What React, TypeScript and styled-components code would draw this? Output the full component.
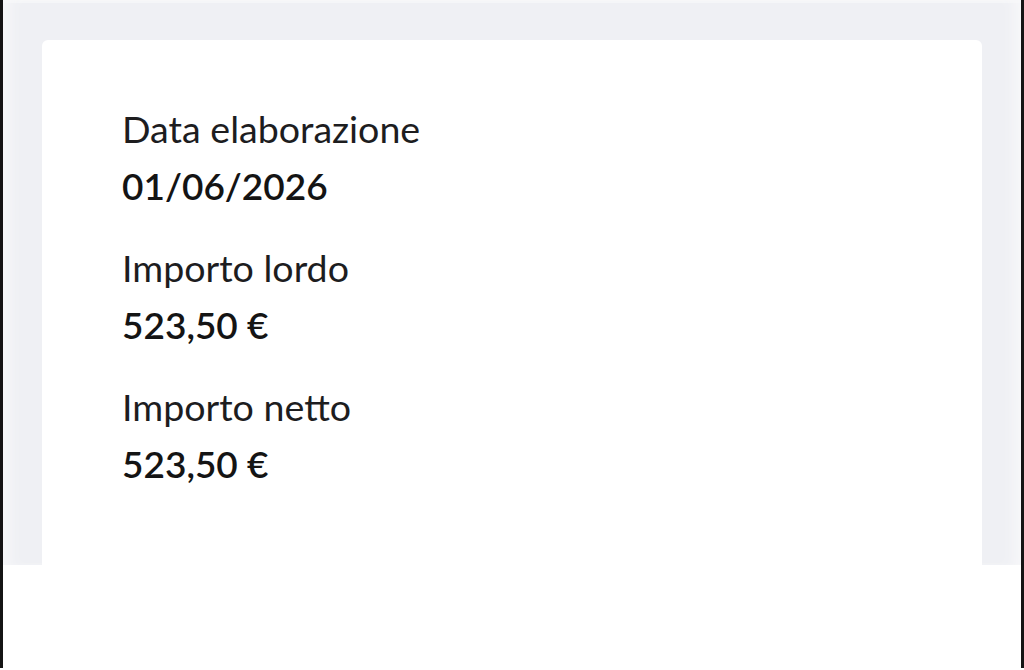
import React from "react";
import styled, { createGlobalStyle } from "styled-components";

const GlobalStyle = createGlobalStyle`
  html, body {
    margin: 0;
    padding: 0;
    background: #ffffff;
  }
  * { box-sizing: border-box; }
`;

const Frame = styled.div`
  width: 1024px;
  height: 668px;
  border-left: 3px solid #141414;
  border-right: 3px solid #141414;
  background: #ffffff;
  display: flex;
  flex-direction: column;
`;

const Backdrop = styled.div`
  height: 565px;
  background: #eff0f4;
  padding: 40px 39px 0 39px;
  display: flex;
  box-shadow: inset 14px 0 14px -8px #f8f8fa, inset -14px 0 14px -8px #f8f8fa,
    inset 0 3px 0 0 #f5f6f8;
`;

const Card = styled.section`
  flex: 1;
  background: #ffffff;
  border-radius: 6px 6px 0 0;
  padding: 65px 80px 0 80px;
  display: flex;
  flex-direction: column;
  gap: 34px;
`;

const Field = styled.div`
  display: flex;
  flex-direction: column;
  gap: 9px;
`;

const Label = styled.div`
  font-family: Lato, "Open Sans", sans-serif;
  font-size: 37.6px;
  line-height: 48px;
  font-weight: 400;
  color: #1d1d1f;
`;

const Value = styled.div`
  font-family: Lato, "Open Sans", sans-serif;
  font-size: 37px;
  line-height: 48px;
  font-weight: 600;
  color: #141414;
`;

const fields = [
  { label: "Data elaborazione", value: "01/06/2026" },
  { label: "Importo lordo", value: "523,50 €" },
  { label: "Importo netto", value: "523,50 €" },
];

export default function App() {
  return (
    <>
      <GlobalStyle />
      <Frame>
        <Backdrop>
          <Card>
            {fields.map((f) => (
              <Field key={f.label}>
                <Label>{f.label}</Label>
                <Value>{f.value}</Value>
              </Field>
            ))}
          </Card>
        </Backdrop>
      </Frame>
    </>
  );
}
